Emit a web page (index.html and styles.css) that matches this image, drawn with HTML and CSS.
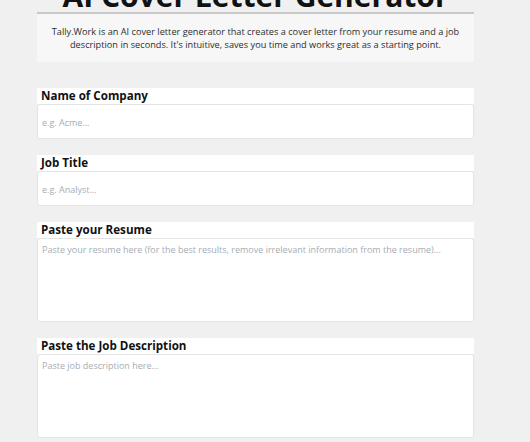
FILE: index.html
```html
<!DOCTYPE html>
<html>
<head>
    <title>Tally.Work - AI Cover Letter Generator</title>
    <link rel="stylesheet" href="styles.css">
</head>
<body>
    <div class="container">
        <h1>AI Cover Letter Generator</h1>
        <div class="intro">
            <p>Tally.Work is an AI cover letter generator that creates a cover letter from your resume and a job description in seconds. It's intuitive, saves you time and works great as a starting point.</p>
        </div>
        <form class="letter-form">
            <div class="field">
                <label for="company">Name of Company</label>
                <input type="text" id="company" placeholder="e.g. Acme...">
            </div>
            <div class="field">
                <label for="jobTitle">Job Title</label>
                <input type="text" id="jobTitle" placeholder="e.g. Analyst...">
            </div>
            <div class="field">
                <label for="resume">Paste your Resume</label>
                <textarea id="resume" placeholder="Paste your resume here (for the best results, remove irrelevant information from the resume)..."></textarea>
            </div>
            <div class="field">
                <label for="jobDesc">Paste the Job Description</label>
                <textarea id="jobDesc" placeholder="Paste job description here..."></textarea>
            </div>
        </form>
    </div>
</body>
</html>
```

FILE: styles.css
```css
body {
    font-family: 'Open Sans', sans-serif;
    background-color: #f0f0f0;
    margin: 0;
    padding: 0;
    overflow: hidden;
}
.container {
    width: 437px;
    margin-left: 37px;
}
h1 {
    margin: -19px 0 0;
    font-size: 30px;
    line-height: 30px;
    font-weight: 700;
    color: #111;
    text-align: center;
    white-space: nowrap;
    padding-bottom: 1px;
    border-bottom: 2px solid #c8c8c8;
}
.intro {
    background-color: #f7f7f7;
    padding: 11px 6px 11px;
}
.intro p {
    margin: 0;
    font-size: 9.2px;
    line-height: 13px;
    color: #2e2e2e;
    text-align: center;
}
.letter-form {
    margin-top: 26px;
}
.field {
    margin-bottom: 16px;
}
label {
    display: block;
    background-color: #fff;
    font-size: 11.6px;
    font-weight: 700;
    line-height: 16px;
    height: 16px;
    padding-left: 4px;
    color: #111;
}
input[type="text"],
textarea {
    display: block;
    box-sizing: border-box;
    width: 100%;
    margin: 0;
    padding: 4px 4px;
    border: 1px solid #e4e4e4;
    border-radius: 3px;
    background-color: #fff;
    font-family: 'Open Sans', sans-serif;
    font-size: 9px;
    color: #333;
    outline: none;
}
input[type="text"] {
    height: 35px;
    padding-top: 5px;
}
textarea {
    height: 84px;
    resize: none;
    line-height: 13px;
}
::placeholder {
    color: #a6adb5;
}
```
